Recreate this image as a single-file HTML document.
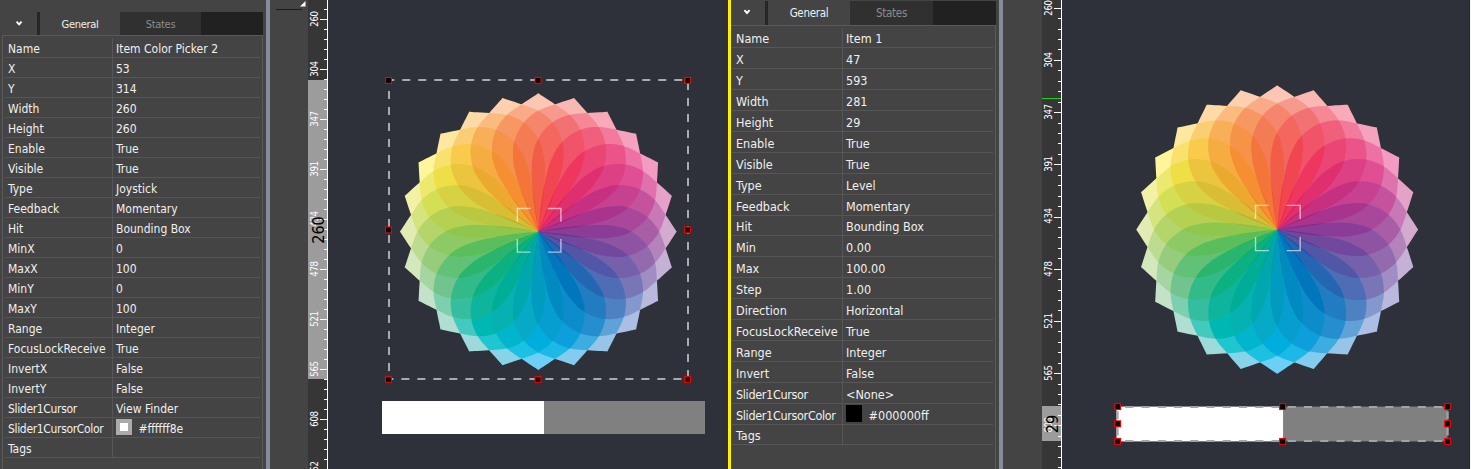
<!DOCTYPE html><html><head><meta charset="utf-8"><title>Properties</title><style>
html,body{margin:0;padding:0;background:#444444}
#root{position:relative;width:1471px;height:469px;overflow:hidden;background:#444444;font-family:"DejaVu Sans Condensed","Liberation Sans",sans-serif;color:#f0f0f0}
#root div,#root span,#root i{box-sizing:content-box}
.a{position:absolute}
.r{position:absolute;border-bottom:1px solid #565656;box-sizing:border-box!important;white-space:nowrap}
.tab{position:absolute;text-align:center;white-space:nowrap}
.rl{position:absolute;left:7px;font-size:9.6px;letter-spacing:-0.4px;line-height:10px;white-space:nowrap;transform:translate(-50%,-50%) rotate(-90deg);color:#fff}
svg{position:absolute;left:0;top:0}
</style></head><body><div id="root"><div class="a" style="left:37px;top:12px;width:3px;height:23px;background:#262626"></div><div class="tab" style="left:40px;top:12px;width:80px;height:23px;line-height:25px;font-size:11px;letter-spacing:-0.3px">General</div><div class="tab" style="left:120px;top:12px;width:81px;height:23px;line-height:25px;font-size:11px;letter-spacing:-0.3px;background:#303030;color:#8c8c8c">States</div><div class="a" style="left:201px;top:12px;width:62px;height:23px;background:#212121"></div><div class="a" style="left:2px;top:35px;width:259px;height:440px;border:1px solid #5a5a5a;border-bottom:none"></div><div class="r" style="left:5px;top:37.50px;width:255px;height:20px;line-height:20px;font-size:12px"><span style="position:absolute;left:3px;top:1px">Name</span><span style="position:absolute;left:111px;top:1px">Item Color Picker 2</span></div><div class="r" style="left:5px;top:57.50px;width:255px;height:20px;line-height:20px;font-size:12px"><span style="position:absolute;left:3px;top:1px">X</span><span style="position:absolute;left:111px;top:1px">53</span></div><div class="r" style="left:5px;top:77.50px;width:255px;height:20px;line-height:20px;font-size:12px"><span style="position:absolute;left:3px;top:1px">Y</span><span style="position:absolute;left:111px;top:1px">314</span></div><div class="r" style="left:5px;top:97.50px;width:255px;height:20px;line-height:20px;font-size:12px"><span style="position:absolute;left:3px;top:1px">Width</span><span style="position:absolute;left:111px;top:1px">260</span></div><div class="r" style="left:5px;top:117.50px;width:255px;height:20px;line-height:20px;font-size:12px"><span style="position:absolute;left:3px;top:1px">Height</span><span style="position:absolute;left:111px;top:1px">260</span></div><div class="r" style="left:5px;top:137.50px;width:255px;height:20px;line-height:20px;font-size:12px"><span style="position:absolute;left:3px;top:1px">Enable</span><span style="position:absolute;left:111px;top:1px">True</span></div><div class="r" style="left:5px;top:157.50px;width:255px;height:20px;line-height:20px;font-size:12px"><span style="position:absolute;left:3px;top:1px">Visible</span><span style="position:absolute;left:111px;top:1px">True</span></div><div class="r" style="left:5px;top:177.50px;width:255px;height:20px;line-height:20px;font-size:12px"><span style="position:absolute;left:3px;top:1px">Type</span><span style="position:absolute;left:111px;top:1px">Joystick</span></div><div class="r" style="left:5px;top:197.50px;width:255px;height:20px;line-height:20px;font-size:12px"><span style="position:absolute;left:3px;top:1px">Feedback</span><span style="position:absolute;left:111px;top:1px">Momentary</span></div><div class="r" style="left:5px;top:217.50px;width:255px;height:20px;line-height:20px;font-size:12px"><span style="position:absolute;left:3px;top:1px">Hit</span><span style="position:absolute;left:111px;top:1px">Bounding Box</span></div><div class="r" style="left:5px;top:237.50px;width:255px;height:20px;line-height:20px;font-size:12px"><span style="position:absolute;left:3px;top:1px">MinX</span><span style="position:absolute;left:111px;top:1px">0</span></div><div class="r" style="left:5px;top:257.50px;width:255px;height:20px;line-height:20px;font-size:12px"><span style="position:absolute;left:3px;top:1px">MaxX</span><span style="position:absolute;left:111px;top:1px">100</span></div><div class="r" style="left:5px;top:277.50px;width:255px;height:20px;line-height:20px;font-size:12px"><span style="position:absolute;left:3px;top:1px">MinY</span><span style="position:absolute;left:111px;top:1px">0</span></div><div class="r" style="left:5px;top:297.50px;width:255px;height:20px;line-height:20px;font-size:12px"><span style="position:absolute;left:3px;top:1px">MaxY</span><span style="position:absolute;left:111px;top:1px">100</span></div><div class="r" style="left:5px;top:317.50px;width:255px;height:20px;line-height:20px;font-size:12px"><span style="position:absolute;left:3px;top:1px">Range</span><span style="position:absolute;left:111px;top:1px">Integer</span></div><div class="r" style="left:5px;top:337.50px;width:255px;height:20px;line-height:20px;font-size:12px"><span style="position:absolute;left:3px;top:1px">FocusLockReceive</span><span style="position:absolute;left:111px;top:1px">True</span></div><div class="r" style="left:5px;top:357.50px;width:255px;height:20px;line-height:20px;font-size:12px"><span style="position:absolute;left:3px;top:1px">InvertX</span><span style="position:absolute;left:111px;top:1px">False</span></div><div class="r" style="left:5px;top:377.50px;width:255px;height:20px;line-height:20px;font-size:12px"><span style="position:absolute;left:3px;top:1px">InvertY</span><span style="position:absolute;left:111px;top:1px">False</span></div><div class="r" style="left:5px;top:397.50px;width:255px;height:20px;line-height:20px;font-size:12px"><span style="position:absolute;left:3px;top:1px;letter-spacing:-0.33px">Slider1Cursor</span><span style="position:absolute;left:111px;top:1px">View Finder</span></div><div class="r" style="left:5px;top:417.50px;width:255px;height:20px;line-height:20px;font-size:12px"><span style="position:absolute;left:3px;top:1px;letter-spacing:-0.33px">Slider1CursorColor</span><i style="position:absolute;left:111px;top:1.5px;width:8px;height:8px;background:#fff;border:4px solid #ababab"></i><span style="position:absolute;left:133.4px;top:1px">#ffffff8e</span></div><div class="r" style="left:5px;top:437.50px;width:255px;height:20px;line-height:20px;font-size:12px"><span style="position:absolute;left:3px;top:1px">Tags</span><span style="position:absolute;left:111px;top:1px"></span></div><div style="position:absolute;left:112px;top:37.5px;width:1px;height:420.0px;background:#565656"></div><div class="a" style="left:266px;top:0;width:4px;height:469px;background:#868c9b"></div><div class="a" style="left:276px;top:9px;width:26px;height:1px;background:#1c1c1c"></div><div style="position:absolute;left:308px;top:0;width:20px;height:469px;background:#363636;overflow:hidden"><div style="position:absolute;left:0;top:80px;width:19px;height:299px;background:#9c9c9c"></div><div style="position:absolute;left:16px;top:-1.20px;width:3px;height:1px;background:#fff"></div><div style="position:absolute;left:16px;top:8.80px;width:3px;height:1px;background:#fff"></div><div style="position:absolute;left:12px;top:18.80px;width:7px;height:1px;background:#fff"></div><div style="position:absolute;left:16px;top:28.80px;width:3px;height:1px;background:#fff"></div><div style="position:absolute;left:16px;top:38.80px;width:3px;height:1px;background:#fff"></div><div style="position:absolute;left:16px;top:48.80px;width:3px;height:1px;background:#fff"></div><div style="position:absolute;left:16px;top:58.80px;width:3px;height:1px;background:#fff"></div><div style="position:absolute;left:12px;top:68.80px;width:7px;height:1px;background:#fff"></div><div style="position:absolute;left:16px;top:78.80px;width:3px;height:1px;background:#fff"></div><div style="position:absolute;left:16px;top:88.80px;width:3px;height:1px;background:#fff"></div><div style="position:absolute;left:16px;top:98.80px;width:3px;height:1px;background:#fff"></div><div style="position:absolute;left:16px;top:108.80px;width:3px;height:1px;background:#fff"></div><div style="position:absolute;left:12px;top:118.80px;width:7px;height:1px;background:#fff"></div><div style="position:absolute;left:16px;top:128.80px;width:3px;height:1px;background:#fff"></div><div style="position:absolute;left:16px;top:138.80px;width:3px;height:1px;background:#fff"></div><div style="position:absolute;left:16px;top:148.80px;width:3px;height:1px;background:#fff"></div><div style="position:absolute;left:16px;top:158.80px;width:3px;height:1px;background:#fff"></div><div style="position:absolute;left:12px;top:168.80px;width:7px;height:1px;background:#fff"></div><div style="position:absolute;left:16px;top:178.80px;width:3px;height:1px;background:#fff"></div><div style="position:absolute;left:16px;top:188.80px;width:3px;height:1px;background:#fff"></div><div style="position:absolute;left:16px;top:198.80px;width:3px;height:1px;background:#fff"></div><div style="position:absolute;left:16px;top:208.80px;width:3px;height:1px;background:#fff"></div><div style="position:absolute;left:12px;top:218.80px;width:7px;height:1px;background:#fff"></div><div style="position:absolute;left:16px;top:228.80px;width:3px;height:1px;background:#fff"></div><div style="position:absolute;left:16px;top:238.80px;width:3px;height:1px;background:#fff"></div><div style="position:absolute;left:16px;top:248.80px;width:3px;height:1px;background:#fff"></div><div style="position:absolute;left:16px;top:258.80px;width:3px;height:1px;background:#fff"></div><div style="position:absolute;left:12px;top:268.80px;width:7px;height:1px;background:#fff"></div><div style="position:absolute;left:16px;top:278.80px;width:3px;height:1px;background:#fff"></div><div style="position:absolute;left:16px;top:288.80px;width:3px;height:1px;background:#fff"></div><div style="position:absolute;left:16px;top:298.80px;width:3px;height:1px;background:#fff"></div><div style="position:absolute;left:16px;top:308.80px;width:3px;height:1px;background:#fff"></div><div style="position:absolute;left:12px;top:318.80px;width:7px;height:1px;background:#fff"></div><div style="position:absolute;left:16px;top:328.80px;width:3px;height:1px;background:#fff"></div><div style="position:absolute;left:16px;top:338.80px;width:3px;height:1px;background:#fff"></div><div style="position:absolute;left:16px;top:348.80px;width:3px;height:1px;background:#fff"></div><div style="position:absolute;left:16px;top:358.80px;width:3px;height:1px;background:#fff"></div><div style="position:absolute;left:12px;top:368.80px;width:7px;height:1px;background:#fff"></div><div style="position:absolute;left:16px;top:378.80px;width:3px;height:1px;background:#fff"></div><div style="position:absolute;left:16px;top:388.80px;width:3px;height:1px;background:#fff"></div><div style="position:absolute;left:16px;top:398.80px;width:3px;height:1px;background:#fff"></div><div style="position:absolute;left:16px;top:408.80px;width:3px;height:1px;background:#fff"></div><div style="position:absolute;left:12px;top:418.80px;width:7px;height:1px;background:#fff"></div><div style="position:absolute;left:16px;top:428.80px;width:3px;height:1px;background:#fff"></div><div style="position:absolute;left:16px;top:438.80px;width:3px;height:1px;background:#fff"></div><div style="position:absolute;left:16px;top:448.80px;width:3px;height:1px;background:#fff"></div><div style="position:absolute;left:16px;top:458.80px;width:3px;height:1px;background:#fff"></div><div style="position:absolute;left:12px;top:468.80px;width:7px;height:1px;background:#fff"></div><div class="rl" style="top:18.70px">260</div><div class="rl" style="top:68.70px">304</div><div class="rl" style="top:118.70px">347</div><div class="rl" style="top:168.70px">391</div><div class="rl" style="top:218.70px">434</div><div class="rl" style="top:268.70px">478</div><div class="rl" style="top:318.70px">521</div><div class="rl" style="top:368.70px">565</div><div class="rl" style="top:418.70px">608</div><div class="rl" style="top:468.70px">652</div><div class="rl" style="top:229.50px;font-size:16px;letter-spacing:0;color:#000;left:11px">260</div><div style="position:absolute;left:19px;top:0;width:1px;height:469px;background:#fff"></div></div><div class="a" style="left:328px;top:0;width:398px;height:469px;background:#2e313a"></div><div class="a" style="left:726px;top:0;width:3px;height:469px;background:#303036"></div><div class="a" style="left:728.2px;top:0;width:2.6px;height:469px;background:#fff200"></div><div class="a" style="left:765px;top:1px;width:3px;height:24px;background:#262626"></div><div class="tab" style="left:768px;top:1px;width:82px;height:24px;line-height:24.6px;font-size:11.5px;letter-spacing:-0.3px">General</div><div class="tab" style="left:850px;top:1px;width:83px;height:24px;line-height:24.6px;font-size:11.5px;letter-spacing:-0.3px;background:#303030;color:#8c8c8c">States</div><div class="a" style="left:933px;top:1px;width:63px;height:24px;background:#212121"></div><div class="a" style="left:730.5px;top:25px;width:264px;height:450px;border:1px solid #5a5a5a;border-bottom:none;border-left:none"></div><div class="r" style="left:732px;top:27.50px;width:261px;height:20.9px;line-height:20.9px;font-size:12.5px"><span style="position:absolute;left:4px;top:1.9px">Name</span><span style="position:absolute;left:114px;top:1.9px">Item 1</span></div><div class="r" style="left:732px;top:48.40px;width:261px;height:20.9px;line-height:20.9px;font-size:12.5px"><span style="position:absolute;left:4px;top:1.9px">X</span><span style="position:absolute;left:114px;top:1.9px">47</span></div><div class="r" style="left:732px;top:69.30px;width:261px;height:20.9px;line-height:20.9px;font-size:12.5px"><span style="position:absolute;left:4px;top:1.9px">Y</span><span style="position:absolute;left:114px;top:1.9px">593</span></div><div class="r" style="left:732px;top:90.20px;width:261px;height:20.9px;line-height:20.9px;font-size:12.5px"><span style="position:absolute;left:4px;top:1.9px">Width</span><span style="position:absolute;left:114px;top:1.9px">281</span></div><div class="r" style="left:732px;top:111.10px;width:261px;height:20.9px;line-height:20.9px;font-size:12.5px"><span style="position:absolute;left:4px;top:1.9px">Height</span><span style="position:absolute;left:114px;top:1.9px">29</span></div><div class="r" style="left:732px;top:132.00px;width:261px;height:20.9px;line-height:20.9px;font-size:12.5px"><span style="position:absolute;left:4px;top:1.9px">Enable</span><span style="position:absolute;left:114px;top:1.9px">True</span></div><div class="r" style="left:732px;top:152.90px;width:261px;height:20.9px;line-height:20.9px;font-size:12.5px"><span style="position:absolute;left:4px;top:1.9px">Visible</span><span style="position:absolute;left:114px;top:1.9px">True</span></div><div class="r" style="left:732px;top:173.80px;width:261px;height:20.9px;line-height:20.9px;font-size:12.5px"><span style="position:absolute;left:4px;top:1.9px">Type</span><span style="position:absolute;left:114px;top:1.9px">Level</span></div><div class="r" style="left:732px;top:194.70px;width:261px;height:20.9px;line-height:20.9px;font-size:12.5px"><span style="position:absolute;left:4px;top:1.9px">Feedback</span><span style="position:absolute;left:114px;top:1.9px">Momentary</span></div><div class="r" style="left:732px;top:215.60px;width:261px;height:20.9px;line-height:20.9px;font-size:12.5px"><span style="position:absolute;left:4px;top:1.9px">Hit</span><span style="position:absolute;left:114px;top:1.9px">Bounding Box</span></div><div class="r" style="left:732px;top:236.50px;width:261px;height:20.9px;line-height:20.9px;font-size:12.5px"><span style="position:absolute;left:4px;top:1.9px">Min</span><span style="position:absolute;left:114px;top:1.9px">0.00</span></div><div class="r" style="left:732px;top:257.40px;width:261px;height:20.9px;line-height:20.9px;font-size:12.5px"><span style="position:absolute;left:4px;top:1.9px">Max</span><span style="position:absolute;left:114px;top:1.9px">100.00</span></div><div class="r" style="left:732px;top:278.30px;width:261px;height:20.9px;line-height:20.9px;font-size:12.5px"><span style="position:absolute;left:4px;top:1.9px">Step</span><span style="position:absolute;left:114px;top:1.9px">1.00</span></div><div class="r" style="left:732px;top:299.20px;width:261px;height:20.9px;line-height:20.9px;font-size:12.5px"><span style="position:absolute;left:4px;top:1.9px">Direction</span><span style="position:absolute;left:114px;top:1.9px">Horizontal</span></div><div class="r" style="left:732px;top:320.10px;width:261px;height:20.9px;line-height:20.9px;font-size:12.5px"><span style="position:absolute;left:4px;top:1.9px">FocusLockReceive</span><span style="position:absolute;left:114px;top:1.9px">True</span></div><div class="r" style="left:732px;top:341.00px;width:261px;height:20.9px;line-height:20.9px;font-size:12.5px"><span style="position:absolute;left:4px;top:1.9px">Range</span><span style="position:absolute;left:114px;top:1.9px">Integer</span></div><div class="r" style="left:732px;top:361.90px;width:261px;height:20.9px;line-height:20.9px;font-size:12.5px"><span style="position:absolute;left:4px;top:1.9px">Invert</span><span style="position:absolute;left:114px;top:1.9px">False</span></div><div class="r" style="left:732px;top:382.80px;width:261px;height:20.9px;line-height:20.9px;font-size:12.5px"><span style="position:absolute;left:4px;top:1.9px;letter-spacing:-0.33px">Slider1Cursor</span><span style="position:absolute;left:114px;top:1.9px">&lt;None&gt;</span></div><div class="r" style="left:732px;top:403.70px;width:261px;height:20.9px;line-height:20.9px;font-size:12.5px"><span style="position:absolute;left:4px;top:1.9px;letter-spacing:-0.33px">Slider1CursorColor</span><i style="position:absolute;left:114px;top:1.8px;width:16.2px;height:16.2px;background:#000"></i><span style="position:absolute;left:136.6px;top:1.9px">#000000ff</span></div><div class="r" style="left:732px;top:424.60px;width:261px;height:20.9px;line-height:20.9px;font-size:12.5px"><span style="position:absolute;left:4px;top:1.9px">Tags</span><span style="position:absolute;left:114px;top:1.9px"></span></div><div style="position:absolute;left:842px;top:27.5px;width:1px;height:418.0px;background:#565656"></div><div class="a" style="left:999px;top:0;width:4px;height:469px;background:#868c9b"></div><div style="position:absolute;left:1042px;top:0;width:20px;height:469px;background:#363636;overflow:hidden"><div style="position:absolute;left:0;top:406px;width:19px;height:35px;background:#9c9c9c"></div><div style="position:absolute;left:12px;top:7.70px;width:7px;height:1px;background:#fff"></div><div style="position:absolute;left:16px;top:18.14px;width:3px;height:1px;background:#fff"></div><div style="position:absolute;left:16px;top:28.58px;width:3px;height:1px;background:#fff"></div><div style="position:absolute;left:16px;top:39.02px;width:3px;height:1px;background:#fff"></div><div style="position:absolute;left:16px;top:49.46px;width:3px;height:1px;background:#fff"></div><div style="position:absolute;left:12px;top:59.90px;width:7px;height:1px;background:#fff"></div><div style="position:absolute;left:16px;top:70.34px;width:3px;height:1px;background:#fff"></div><div style="position:absolute;left:16px;top:80.78px;width:3px;height:1px;background:#fff"></div><div style="position:absolute;left:16px;top:91.22px;width:3px;height:1px;background:#fff"></div><div style="position:absolute;left:16px;top:101.66px;width:3px;height:1px;background:#fff"></div><div style="position:absolute;left:12px;top:112.10px;width:7px;height:1px;background:#fff"></div><div style="position:absolute;left:16px;top:122.54px;width:3px;height:1px;background:#fff"></div><div style="position:absolute;left:16px;top:132.98px;width:3px;height:1px;background:#fff"></div><div style="position:absolute;left:16px;top:143.42px;width:3px;height:1px;background:#fff"></div><div style="position:absolute;left:16px;top:153.86px;width:3px;height:1px;background:#fff"></div><div style="position:absolute;left:12px;top:164.30px;width:7px;height:1px;background:#fff"></div><div style="position:absolute;left:16px;top:174.74px;width:3px;height:1px;background:#fff"></div><div style="position:absolute;left:16px;top:185.18px;width:3px;height:1px;background:#fff"></div><div style="position:absolute;left:16px;top:195.62px;width:3px;height:1px;background:#fff"></div><div style="position:absolute;left:16px;top:206.06px;width:3px;height:1px;background:#fff"></div><div style="position:absolute;left:12px;top:216.50px;width:7px;height:1px;background:#fff"></div><div style="position:absolute;left:16px;top:226.94px;width:3px;height:1px;background:#fff"></div><div style="position:absolute;left:16px;top:237.38px;width:3px;height:1px;background:#fff"></div><div style="position:absolute;left:16px;top:247.82px;width:3px;height:1px;background:#fff"></div><div style="position:absolute;left:16px;top:258.26px;width:3px;height:1px;background:#fff"></div><div style="position:absolute;left:12px;top:268.70px;width:7px;height:1px;background:#fff"></div><div style="position:absolute;left:16px;top:279.14px;width:3px;height:1px;background:#fff"></div><div style="position:absolute;left:16px;top:289.58px;width:3px;height:1px;background:#fff"></div><div style="position:absolute;left:16px;top:300.02px;width:3px;height:1px;background:#fff"></div><div style="position:absolute;left:16px;top:310.46px;width:3px;height:1px;background:#fff"></div><div style="position:absolute;left:12px;top:320.90px;width:7px;height:1px;background:#fff"></div><div style="position:absolute;left:16px;top:331.34px;width:3px;height:1px;background:#fff"></div><div style="position:absolute;left:16px;top:341.78px;width:3px;height:1px;background:#fff"></div><div style="position:absolute;left:16px;top:352.22px;width:3px;height:1px;background:#fff"></div><div style="position:absolute;left:16px;top:362.66px;width:3px;height:1px;background:#fff"></div><div style="position:absolute;left:12px;top:373.10px;width:7px;height:1px;background:#fff"></div><div style="position:absolute;left:16px;top:383.54px;width:3px;height:1px;background:#fff"></div><div style="position:absolute;left:16px;top:393.98px;width:3px;height:1px;background:#fff"></div><div style="position:absolute;left:16px;top:404.42px;width:3px;height:1px;background:#fff"></div><div style="position:absolute;left:16px;top:414.86px;width:3px;height:1px;background:#fff"></div><div style="position:absolute;left:12px;top:425.30px;width:7px;height:1px;background:#fff"></div><div style="position:absolute;left:16px;top:435.74px;width:3px;height:1px;background:#fff"></div><div style="position:absolute;left:16px;top:446.18px;width:3px;height:1px;background:#fff"></div><div style="position:absolute;left:16px;top:456.62px;width:3px;height:1px;background:#fff"></div><div style="position:absolute;left:16px;top:467.06px;width:3px;height:1px;background:#fff"></div><div class="rl" style="top:7.60px">260</div><div class="rl" style="top:59.80px">304</div><div class="rl" style="top:112.00px">347</div><div class="rl" style="top:164.20px">391</div><div class="rl" style="top:216.40px">434</div><div class="rl" style="top:268.60px">478</div><div class="rl" style="top:320.80px">521</div><div class="rl" style="top:373.00px">565</div><div class="rl" style="top:425.20px">608</div><div class="rl" style="top:477.40px">652</div><div class="rl" style="top:423.50px;font-size:16px;letter-spacing:0;color:#000;left:11px">29</div><div style="position:absolute;left:0;top:98px;width:19px;height:1px;background:#1fd01f"></div><div style="position:absolute;left:19px;top:0;width:1px;height:469px;background:#fff"></div></div><div class="a" style="left:1062px;top:0;width:409px;height:469px;background:#2e313a"></div><div class="a" style="left:1469px;top:0;width:1px;height:469px;background:#23262d"></div><div class="a" style="left:1470px;top:0;width:1px;height:469px;background:#f4f4f4"></div><svg width="1471" height="469" viewBox="0 0 1471 469"><defs><path id="L1" d="M0.00,0.00 2.93,2.45 5.85,4.85 8.74,7.19 11.61,9.47 14.46,11.70 17.30,13.85 20.13,15.94 22.94,17.96 25.74,19.90 28.52,21.76 31.29,23.56 34.04,25.27 36.80,26.87 39.56,28.36 42.37,29.66 45.25,30.76 48.10,31.75 50.92,32.65 53.82,33.28 56.84,33.53 59.90,33.52 62.96,33.29 66.01,32.82 69.06,32.09 72.08,31.07 75.09,29.72 78.09,27.93 81.04,25.72 83.88,23.16 86.63,20.02 89.24,16.29 91.50,12.80 93.44,9.97 95.12,7.43 96.58,5.19 97.81,3.28 98.82,1.74 99.59,0.60 100.00,0.00 99.59,-0.60 98.82,-1.74 97.81,-3.28 96.58,-5.19 95.12,-7.43 93.44,-9.97 91.50,-12.80 89.24,-16.29 86.63,-20.02 83.88,-23.16 81.04,-25.72 78.09,-27.93 75.09,-29.72 72.08,-31.07 69.06,-32.09 66.01,-32.82 62.96,-33.29 59.90,-33.52 56.84,-33.53 53.82,-33.28 50.92,-32.65 48.10,-31.75 45.25,-30.76 42.37,-29.66 39.56,-28.36 36.80,-26.87 34.04,-25.27 31.29,-23.56 28.52,-21.76 25.74,-19.90 22.94,-17.96 20.13,-15.94 17.30,-13.85 14.46,-11.70 11.61,-9.47 8.74,-7.19 5.85,-4.85 2.93,-2.45Z"/><path id="L2" d="M0.00,0.00 2.99,1.90 5.96,3.75 8.90,5.56 11.82,7.32 14.70,9.03 17.57,10.69 20.41,12.28 23.23,13.82 26.02,15.29 28.79,16.70 31.53,18.06 34.25,19.34 36.94,20.56 39.61,21.69 42.27,22.72 44.93,23.61 47.62,24.31 50.29,24.89 52.91,25.42 55.51,25.83 58.15,25.97 60.82,25.81 63.48,25.46 66.09,24.95 68.65,24.27 71.16,23.41 73.61,22.36 75.99,21.13 78.29,19.69 80.50,17.98 82.61,16.06 84.57,13.96 86.37,11.77 88.01,9.38 89.47,6.77 90.69,4.31 91.66,2.26 92.39,0.76 92.77,0.00 92.39,-0.76 91.66,-2.26 90.69,-4.31 89.47,-6.77 88.01,-9.38 86.37,-11.77 84.57,-13.96 82.61,-16.06 80.50,-17.98 78.29,-19.69 75.99,-21.13 73.61,-22.36 71.16,-23.41 68.65,-24.27 66.09,-24.95 63.48,-25.46 60.82,-25.81 58.15,-25.97 55.51,-25.83 52.91,-25.42 50.29,-24.89 47.62,-24.31 44.93,-23.61 42.27,-22.72 39.61,-21.69 36.94,-20.56 34.25,-19.34 31.53,-18.06 28.79,-16.70 26.02,-15.29 23.23,-13.82 20.41,-12.28 17.57,-10.69 14.70,-9.03 11.82,-7.32 8.90,-5.56 5.96,-3.75 2.99,-1.90Z"/><path id="L3" d="M0.00,0.00 3.03,1.40 6.03,2.77 9.00,4.10 11.93,5.39 14.84,6.64 17.71,7.85 20.55,9.01 23.37,10.11 26.15,11.16 28.90,12.16 31.62,13.11 34.30,14.01 36.95,14.85 39.57,15.64 42.15,16.34 44.71,16.97 47.24,17.48 49.77,17.82 52.28,18.05 54.72,18.23 57.12,18.35 59.49,18.32 61.86,18.03 64.20,17.52 66.49,16.89 68.71,16.14 70.86,15.27 72.92,14.29 74.90,13.19 76.78,11.98 78.56,10.68 80.22,9.27 81.76,7.75 83.16,6.18 84.40,4.60 85.48,3.09 86.37,1.73 87.04,0.62 87.40,0.00 87.04,-0.62 86.37,-1.73 85.48,-3.09 84.40,-4.60 83.16,-6.18 81.76,-7.75 80.22,-9.27 78.56,-10.68 76.78,-11.98 74.90,-13.19 72.92,-14.29 70.86,-15.27 68.71,-16.14 66.49,-16.89 64.20,-17.52 61.86,-18.03 59.49,-18.32 57.12,-18.35 54.72,-18.23 52.28,-18.05 49.77,-17.82 47.24,-17.48 44.71,-16.97 42.15,-16.34 39.57,-15.64 36.95,-14.85 34.30,-14.01 31.62,-13.11 28.90,-12.16 26.15,-11.16 23.37,-10.11 20.55,-9.01 17.71,-7.85 14.84,-6.64 11.93,-5.39 9.00,-4.10 6.03,-2.77 3.03,-1.40Z"/><path id="L4" d="M0.00,0.00 2.90,0.91 5.77,1.79 8.61,2.64 11.41,3.47 14.18,4.26 16.91,5.02 19.61,5.74 22.28,6.43 24.91,7.08 27.51,7.68 30.07,8.25 32.59,8.78 35.07,9.27 37.51,9.72 39.91,10.13 42.27,10.48 44.59,10.78 46.87,11.02 49.11,11.17 51.33,11.18 53.50,11.11 55.62,10.99 57.67,10.86 59.67,10.67 61.62,10.35 63.52,9.85 65.37,9.22 67.14,8.50 68.83,7.73 70.44,6.92 71.95,6.07 73.36,5.18 74.67,4.28 75.87,3.38 76.94,2.51 77.88,1.68 78.67,0.94 79.27,0.34 79.60,0.00 79.27,-0.34 78.67,-0.94 77.88,-1.68 76.94,-2.51 75.87,-3.38 74.67,-4.28 73.36,-5.18 71.95,-6.07 70.44,-6.92 68.83,-7.73 67.14,-8.50 65.37,-9.22 63.52,-9.85 61.62,-10.35 59.67,-10.67 57.67,-10.86 55.62,-10.99 53.50,-11.11 51.33,-11.18 49.11,-11.17 46.87,-11.02 44.59,-10.78 42.27,-10.48 39.91,-10.13 37.51,-9.72 35.07,-9.27 32.59,-8.78 30.07,-8.25 27.51,-7.68 24.91,-7.08 22.28,-6.43 19.61,-5.74 16.91,-5.02 14.18,-4.26 11.41,-3.47 8.61,-2.64 5.77,-1.79 2.90,-0.91Z"/><path id="L5" d="M0.00,0.00 2.53,0.44 5.02,0.87 7.48,1.27 9.92,1.66 12.31,2.03 14.68,2.38 17.01,2.71 19.31,3.02 21.58,3.31 23.81,3.57 26.00,3.80 28.16,4.02 30.28,4.21 32.37,4.37 34.41,4.51 36.42,4.64 38.38,4.74 40.30,4.81 42.18,4.86 44.01,4.88 45.80,4.87 47.55,4.82 49.24,4.74 50.89,4.58 52.49,4.37 54.03,4.11 55.52,3.84 56.94,3.57 58.29,3.30 59.58,3.02 60.81,2.72 61.95,2.38 63.02,2.00 64.00,1.59 64.89,1.18 65.66,0.79 66.32,0.44 66.82,0.16 67.10,0.00 66.82,-0.16 66.32,-0.44 65.66,-0.79 64.89,-1.18 64.00,-1.59 63.02,-2.00 61.95,-2.38 60.81,-2.72 59.58,-3.02 58.29,-3.30 56.94,-3.57 55.52,-3.84 54.03,-4.11 52.49,-4.37 50.89,-4.58 49.24,-4.74 47.55,-4.82 45.80,-4.87 44.01,-4.88 42.18,-4.86 40.30,-4.81 38.38,-4.74 36.42,-4.64 34.41,-4.51 32.37,-4.37 30.28,-4.21 28.16,-4.02 26.00,-3.80 23.81,-3.57 21.58,-3.31 19.31,-3.02 17.01,-2.71 14.68,-2.38 12.31,-2.03 9.92,-1.66 7.48,-1.27 5.02,-0.87 2.53,-0.44Z"/><path id="L6" d="M0.00,0.00 1.31,0.06 2.61,0.11 3.89,0.16 5.16,0.20 6.40,0.25 7.63,0.29 8.84,0.32 10.03,0.35 11.20,0.38 12.35,0.40 13.48,0.42 14.59,0.44 15.69,0.45 16.76,0.46 17.81,0.47 18.84,0.47 19.84,0.47 20.83,0.47 21.79,0.46 22.72,0.45 23.64,0.44 24.52,0.42 25.39,0.40 26.22,0.38 27.03,0.36 27.81,0.33 28.56,0.30 29.28,0.27 29.97,0.24 30.62,0.21 31.24,0.18 31.82,0.15 32.36,0.12 32.86,0.10 33.31,0.07 33.70,0.05 34.04,0.03 34.30,0.01 34.44,0.00 34.30,-0.01 34.04,-0.03 33.70,-0.05 33.31,-0.07 32.86,-0.10 32.36,-0.12 31.82,-0.15 31.24,-0.18 30.62,-0.21 29.97,-0.24 29.28,-0.27 28.56,-0.30 27.81,-0.33 27.03,-0.36 26.22,-0.38 25.39,-0.40 24.52,-0.42 23.64,-0.44 22.72,-0.45 21.79,-0.46 20.83,-0.47 19.84,-0.47 18.84,-0.47 17.81,-0.47 16.76,-0.46 15.69,-0.45 14.59,-0.44 13.48,-0.42 12.35,-0.40 11.20,-0.38 10.03,-0.35 8.84,-0.32 7.63,-0.29 6.40,-0.25 5.16,-0.20 3.89,-0.16 2.61,-0.11 1.31,-0.06Z"/><g id="flower"><use href="#L1" transform="rotate(-90)" fill="rgb(251,198,179)"/><use href="#L1" transform="rotate(-75)" fill="rgb(250,184,180)"/><use href="#L1" transform="rotate(-60)" fill="rgb(248,170,184)"/><use href="#L1" transform="rotate(-45)" fill="rgb(245,162,190)"/><use href="#L1" transform="rotate(-30)" fill="rgb(243,155,194)"/><use href="#L1" transform="rotate(-15)" fill="rgb(229,162,201)"/><use href="#L1" transform="rotate(0)" fill="rgb(211,171,207)"/><use href="#L1" transform="rotate(15)" fill="rgb(197,177,213)"/><use href="#L1" transform="rotate(30)" fill="rgb(184,185,221)"/><use href="#L1" transform="rotate(45)" fill="rgb(170,191,227)"/><use href="#L1" transform="rotate(60)" fill="rgb(152,196,232)"/><use href="#L1" transform="rotate(75)" fill="rgb(132,203,240)"/><use href="#L1" transform="rotate(90)" fill="rgb(108,207,246)"/><use href="#L1" transform="rotate(105)" fill="rgb(135,212,232)"/><use href="#L1" transform="rotate(120)" fill="rgb(158,217,219)"/><use href="#L1" transform="rotate(135)" fill="rgb(176,222,210)"/><use href="#L1" transform="rotate(150)" fill="rgb(195,226,201)"/><use href="#L1" transform="rotate(165)" fill="rgb(212,231,189)"/><use href="#L1" transform="rotate(180)" fill="rgb(226,235,177)"/><use href="#L1" transform="rotate(195)" fill="rgb(243,241,165)"/><use href="#L1" transform="rotate(210)" fill="rgb(255,246,155)"/><use href="#L1" transform="rotate(225)" fill="rgb(254,232,160)"/><use href="#L1" transform="rotate(240)" fill="rgb(254,218,165)"/><use href="#L1" transform="rotate(255)" fill="rgb(253,208,175)"/><use href="#L2" transform="rotate(-82.5)" fill="rgb(247,154,142)"/><use href="#L2" transform="rotate(-67.5)" fill="rgb(245,136,148)"/><use href="#L2" transform="rotate(-52.5)" fill="rgb(242,122,156)"/><use href="#L2" transform="rotate(-37.5)" fill="rgb(237,113,165)"/><use href="#L2" transform="rotate(-22.5)" fill="rgb(223,113,173)"/><use href="#L2" transform="rotate(-7.5)" fill="rgb(200,121,181)"/><use href="#L2" transform="rotate(7.5)" fill="rgb(179,131,188)"/><use href="#L2" transform="rotate(22.5)" fill="rgb(159,142,196)"/><use href="#L2" transform="rotate(37.5)" fill="rgb(132,152,206)"/><use href="#L2" transform="rotate(52.5)" fill="rgb(96,162,215)"/><use href="#L2" transform="rotate(67.5)" fill="rgb(59,173,224)"/><use href="#L2" transform="rotate(82.5)" fill="rgb(28,185,231)"/><use href="#L2" transform="rotate(97.5)" fill="rgb(27,193,225)"/><use href="#L2" transform="rotate(112.5)" fill="rgb(30,198,208)"/><use href="#L2" transform="rotate(127.5)" fill="rgb(66,202,190)"/><use href="#L2" transform="rotate(142.5)" fill="rgb(124,208,176)"/><use href="#L2" transform="rotate(157.5)" fill="rgb(165,214,162)"/><use href="#L2" transform="rotate(172.5)" fill="rgb(190,220,145)"/><use href="#L2" transform="rotate(187.5)" fill="rgb(214,228,127)"/><use href="#L2" transform="rotate(202.5)" fill="rgb(237,233,111)"/><use href="#L2" transform="rotate(217.5)" fill="rgb(249,225,107)"/><use href="#L2" transform="rotate(232.5)" fill="rgb(252,206,115)"/><use href="#L2" transform="rotate(247.5)" fill="rgb(251,186,126)"/><use href="#L2" transform="rotate(262.5)" fill="rgb(249,170,135)"/><use href="#L3" transform="rotate(-90)" fill="rgb(245,133,108)"/><use href="#L3" transform="rotate(-75)" fill="rgb(242,114,115)"/><use href="#L3" transform="rotate(-60)" fill="rgb(240,96,124)"/><use href="#L3" transform="rotate(-45)" fill="rgb(236,83,136)"/><use href="#L3" transform="rotate(-30)" fill="rgb(224,78,148)"/><use href="#L3" transform="rotate(-15)" fill="rgb(197,82,157)"/><use href="#L3" transform="rotate(0)" fill="rgb(168,93,164)"/><use href="#L3" transform="rotate(15)" fill="rgb(146,106,173)"/><use href="#L3" transform="rotate(30)" fill="rgb(120,118,183)"/><use href="#L3" transform="rotate(45)" fill="rgb(77,129,194)"/><use href="#L3" transform="rotate(60)" fill="rgb(36,142,207)"/><use href="#L3" transform="rotate(75)" fill="rgb(13,159,219)"/><use href="#L3" transform="rotate(90)" fill="rgb(0,174,221)"/><use href="#L3" transform="rotate(105)" fill="rgb(0,181,204)"/><use href="#L3" transform="rotate(120)" fill="rgb(0,184,179)"/><use href="#L3" transform="rotate(135)" fill="rgb(52,189,159)"/><use href="#L3" transform="rotate(150)" fill="rgb(114,196,143)"/><use href="#L3" transform="rotate(165)" fill="rgb(152,204,125)"/><use href="#L3" transform="rotate(180)" fill="rgb(179,213,105)"/><use href="#L3" transform="rotate(195)" fill="rgb(211,223,84)"/><use href="#L3" transform="rotate(210)" fill="rgb(239,223,71)"/><use href="#L3" transform="rotate(225)" fill="rgb(249,202,75)"/><use href="#L3" transform="rotate(240)" fill="rgb(249,174,88)"/><use href="#L3" transform="rotate(255)" fill="rgb(247,152,99)"/><use href="#L4" transform="rotate(-82.5)" fill="rgb(243,103,94)"/><use href="#L4" transform="rotate(-67.5)" fill="rgb(241,83,104)"/><use href="#L4" transform="rotate(-52.5)" fill="rgb(235,69,117)"/><use href="#L4" transform="rotate(-37.5)" fill="rgb(221,64,132)"/><use href="#L4" transform="rotate(-22.5)" fill="rgb(198,65,144)"/><use href="#L4" transform="rotate(-7.5)" fill="rgb(169,72,154)"/><use href="#L4" transform="rotate(7.5)" fill="rgb(142,83,162)"/><use href="#L4" transform="rotate(22.5)" fill="rgb(116,96,171)"/><use href="#L4" transform="rotate(37.5)" fill="rgb(78,109,181)"/><use href="#L4" transform="rotate(52.5)" fill="rgb(34,124,193)"/><use href="#L4" transform="rotate(67.5)" fill="rgb(13,140,203)"/><use href="#L4" transform="rotate(82.5)" fill="rgb(6,157,207)"/><use href="#L4" transform="rotate(97.5)" fill="rgb(6,170,198)"/><use href="#L4" transform="rotate(112.5)" fill="rgb(6,177,178)"/><use href="#L4" transform="rotate(127.5)" fill="rgb(14,181,156)"/><use href="#L4" transform="rotate(142.5)" fill="rgb(50,186,136)"/><use href="#L4" transform="rotate(157.5)" fill="rgb(97,193,118)"/><use href="#L4" transform="rotate(172.5)" fill="rgb(141,202,101)"/><use href="#L4" transform="rotate(187.5)" fill="rgb(181,209,83)"/><use href="#L4" transform="rotate(202.5)" fill="rgb(214,210,68)"/><use href="#L4" transform="rotate(217.5)" fill="rgb(236,197,62)"/><use href="#L4" transform="rotate(232.5)" fill="rgb(245,173,65)"/><use href="#L4" transform="rotate(247.5)" fill="rgb(246,147,73)"/><use href="#L4" transform="rotate(262.5)" fill="rgb(244,124,84)"/><use href="#L5" transform="rotate(-90)" fill="rgb(241,93,70)"/><use href="#L5" transform="rotate(-75)" fill="rgb(241,70,82)"/><use href="#L5" transform="rotate(-60)" fill="rgb(238,54,95)"/><use href="#L5" transform="rotate(-45)" fill="rgb(223,47,111)"/><use href="#L5" transform="rotate(-30)" fill="rgb(199,48,128)"/><use href="#L5" transform="rotate(-15)" fill="rgb(169,52,141)"/><use href="#L5" transform="rotate(0)" fill="rgb(139,60,151)"/><use href="#L5" transform="rotate(15)" fill="rgb(113,72,158)"/><use href="#L5" transform="rotate(30)" fill="rgb(81,86,166)"/><use href="#L5" transform="rotate(45)" fill="rgb(36,102,178)"/><use href="#L5" transform="rotate(60)" fill="rgb(0,119,189)"/><use href="#L5" transform="rotate(75)" fill="rgb(0,138,194)"/><use href="#L5" transform="rotate(90)" fill="rgb(0,155,190)"/><use href="#L5" transform="rotate(105)" fill="rgb(0,167,174)"/><use href="#L5" transform="rotate(120)" fill="rgb(0,174,152)"/><use href="#L5" transform="rotate(135)" fill="rgb(11,177,129)"/><use href="#L5" transform="rotate(150)" fill="rgb(41,181,109)"/><use href="#L5" transform="rotate(165)" fill="rgb(90,190,92)"/><use href="#L5" transform="rotate(180)" fill="rgb(143,199,78)"/><use href="#L5" transform="rotate(195)" fill="rgb(186,199,64)"/><use href="#L5" transform="rotate(210)" fill="rgb(216,189,53)"/><use href="#L5" transform="rotate(225)" fill="rgb(236,169,48)"/><use href="#L5" transform="rotate(240)" fill="rgb(245,143,50)"/><use href="#L5" transform="rotate(255)" fill="rgb(244,117,58)"/><use href="#L6" transform="rotate(-82.5)" fill="rgb(239,61,58)"/><use href="#L6" transform="rotate(-67.5)" fill="rgb(238,43,71)"/><use href="#L6" transform="rotate(-52.5)" fill="rgb(226,34,88)"/><use href="#L6" transform="rotate(-37.5)" fill="rgb(199,33,106)"/><use href="#L6" transform="rotate(-22.5)" fill="rgb(167,36,124)"/><use href="#L6" transform="rotate(-7.5)" fill="rgb(136,41,137)"/><use href="#L6" transform="rotate(7.5)" fill="rgb(108,49,145)"/><use href="#L6" transform="rotate(22.5)" fill="rgb(78,62,152)"/><use href="#L6" transform="rotate(37.5)" fill="rgb(40,77,161)"/><use href="#L6" transform="rotate(52.5)" fill="rgb(8,96,172)"/><use href="#L6" transform="rotate(67.5)" fill="rgb(0,115,178)"/><use href="#L6" transform="rotate(82.5)" fill="rgb(0,134,175)"/><use href="#L6" transform="rotate(97.5)" fill="rgb(0,151,164)"/><use href="#L6" transform="rotate(112.5)" fill="rgb(0,163,146)"/><use href="#L6" transform="rotate(127.5)" fill="rgb(2,168,124)"/><use href="#L6" transform="rotate(142.5)" fill="rgb(12,170,101)"/><use href="#L6" transform="rotate(157.5)" fill="rgb(40,176,82)"/><use href="#L6" transform="rotate(172.5)" fill="rgb(91,186,69)"/><use href="#L6" transform="rotate(187.5)" fill="rgb(146,187,58)"/><use href="#L6" transform="rotate(202.5)" fill="rgb(185,176,48)"/><use href="#L6" transform="rotate(217.5)" fill="rgb(214,158,39)"/><use href="#L6" transform="rotate(232.5)" fill="rgb(235,136,34)"/><use href="#L6" transform="rotate(247.5)" fill="rgb(242,111,37)"/><use href="#L6" transform="rotate(262.5)" fill="rgb(240,85,46)"/></g><g id="vf" fill="none" stroke="#ffffff" stroke-opacity="0.6" stroke-width="1.4"><path d="M-21.8,-8.6V-21.8H-8.6M8.6,-21.8H21.8V-8.6M21.8,8.6V21.8H8.6M-8.6,21.8H-21.8V8.6"/></g></defs><path d="M16.6,21.6 L19.1,24.3 L21.6,21.6" fill="none" stroke="#fff" stroke-width="1.9"/><path d="M744.4,10.2 L747,13 L749.6,10.2" fill="none" stroke="#fff" stroke-width="1.9"/><path d="M300,6.5 L305.5,1 V6.5Z" fill="#fff"/><use href="#flower" transform="translate(538.3,231.6) scale(1.3835)"/><use href="#vf" transform="translate(539.1,230.3)"/><g stroke="#aaaaaa" stroke-width="2" stroke-dasharray="8,8" fill="none"><path d="M389,80H688" stroke-dashoffset="2.8"/><path d="M389,379H688" stroke-dashoffset="3.6"/><path d="M389,80V379" stroke-dashoffset="5.1"/><path d="M688,80V379" stroke-dashoffset="14"/></g><rect x="385" y="76.9" width="7" height="7" fill="#f00000"/><rect x="386.1" y="78" width="4.8" height="4.8" fill="#000"/><rect x="534.5" y="76.9" width="7" height="7" fill="#f00000"/><rect x="535.6" y="78" width="4.8" height="4.8" fill="#000"/><rect x="684" y="76.9" width="7" height="7" fill="#f00000"/><rect x="685.1" y="78" width="4.8" height="4.8" fill="#000"/><rect x="385" y="226.4" width="7" height="7" fill="#f00000"/><rect x="386.1" y="227.5" width="4.8" height="4.8" fill="#000"/><rect x="684" y="226.4" width="7" height="7" fill="#f00000"/><rect x="685.1" y="227.5" width="4.8" height="4.8" fill="#000"/><rect x="385" y="375.9" width="7" height="7" fill="#f00000"/><rect x="386.1" y="377" width="4.8" height="4.8" fill="#000"/><rect x="534.5" y="375.9" width="7" height="7" fill="#f00000"/><rect x="535.6" y="377" width="4.8" height="4.8" fill="#000"/><rect x="684" y="375.9" width="7" height="7" fill="#f00000"/><rect x="685.1" y="377" width="4.8" height="4.8" fill="#000"/><rect x="382" y="401" width="162" height="33" fill="#fff"/><rect x="544" y="401" width="161" height="33" fill="#808080"/><use href="#flower" transform="translate(1277.2,229.6) scale(1.4095,1.443)"/><use href="#vf" transform="translate(1277.85,228) scale(1.024,1.037)"/><rect x="1116.5" y="406.6" width="167" height="34.8" fill="#fff"/><rect x="1283.4" y="406.6" width="164" height="34.8" fill="#808080"/><g stroke="#a4a4a4" stroke-width="2.2" stroke-dasharray="8.1,8.15" fill="none"><path d="M1117.5,407H1448" stroke-dashoffset="8.5"/><path d="M1117.5,441H1448" stroke-dashoffset="8.5"/><path d="M1117.5,407V441" stroke-dashoffset="12"/><path d="M1447.6,407V441" stroke-dashoffset="12"/></g><rect x="1114.1" y="403.1" width="7" height="7" fill="#f00000"/><rect x="1115.2" y="404.2" width="4.8" height="4.8" fill="#000"/><rect x="1279.1" y="403.1" width="7" height="7" fill="#f00000"/><rect x="1280.2" y="404.2" width="4.8" height="4.8" fill="#000"/><rect x="1444.1" y="403.1" width="7" height="7" fill="#f00000"/><rect x="1445.2" y="404.2" width="4.8" height="4.8" fill="#000"/><rect x="1114.1" y="420.3" width="7" height="7" fill="#f00000"/><rect x="1115.2" y="421.4" width="4.8" height="4.8" fill="#000"/><rect x="1444.1" y="420.3" width="7" height="7" fill="#f00000"/><rect x="1445.2" y="421.4" width="4.8" height="4.8" fill="#000"/><rect x="1114.1" y="437.9" width="7" height="7" fill="#f00000"/><rect x="1115.2" y="439" width="4.8" height="4.8" fill="#000"/><rect x="1279.1" y="437.9" width="7" height="7" fill="#f00000"/><rect x="1280.2" y="439" width="4.8" height="4.8" fill="#000"/><rect x="1444.1" y="437.9" width="7" height="7" fill="#f00000"/><rect x="1445.2" y="439" width="4.8" height="4.8" fill="#000"/></svg></div></body></html>
